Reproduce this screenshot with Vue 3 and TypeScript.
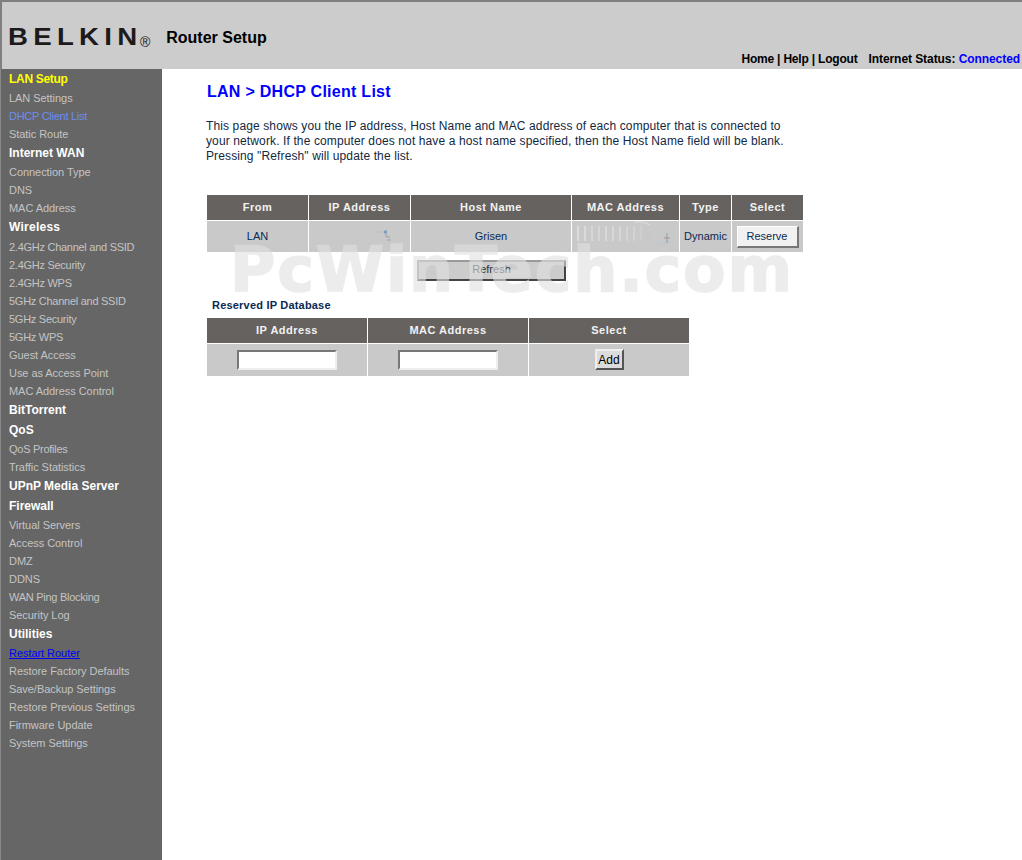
<script setup lang="ts">
interface NavItem { label: string; head?: boolean; kind?: string }
const nav: NavItem[] = [
  { label: 'LAN Setup', head: true, kind: 'cur-head' },
  { label: 'LAN Settings' },
  { label: 'DHCP Client List', kind: 'cur tight' },
  { label: 'Static Route' },
  { label: 'Internet WAN', head: true },
  { label: 'Connection Type' },
  { label: 'DNS' },
  { label: 'MAC Address' },
  { label: 'Wireless', head: true, kind: 'tall' },
  { label: '2.4GHz Channel and SSID', kind: 'tight' },
  { label: '2.4GHz Security', kind: 'tight' },
  { label: '2.4GHz WPS', kind: 'tight' },
  { label: '5GHz Channel and SSID', kind: 'tight' },
  { label: '5GHz Security', kind: 'tight' },
  { label: '5GHz WPS', kind: 'tight' },
  { label: 'Guest Access' },
  { label: 'Use as Access Point' },
  { label: 'MAC Address Control' },
  { label: 'BitTorrent', head: true },
  { label: 'QoS', head: true },
  { label: 'QoS Profiles', kind: 'tight' },
  { label: 'Traffic Statistics' },
  { label: 'UPnP Media Server', head: true },
  { label: 'Firewall', head: true },
  { label: 'Virtual Servers' },
  { label: 'Access Control' },
  { label: 'DMZ' },
  { label: 'DDNS' },
  { label: 'WAN Ping Blocking', kind: 'tight' },
  { label: 'Security Log' },
  { label: 'Utilities', head: true },
  { label: 'Restart Router', kind: 'link' },
  { label: 'Restore Factory Defaults' },
  { label: 'Save/Backup Settings' },
  { label: 'Restore Previous Settings' },
  { label: 'Firmware Update' },
  { label: 'System Settings' },
]
const clientHeads = ['From', 'IP Address', 'Host Name', 'MAC Address', 'Type', 'Select']
const reservedHeads = ['IP Address', 'MAC Address', 'Select']
const stripes = [
  { x: 6, o: 0.9 },
  { x: 13, o: 0.8 },
  { x: 20, o: 0.7 },
  { x: 27, o: 0.6 },
  { x: 34, o: 0.75 },
  { x: 41, o: 0.7 },
  { x: 48, o: 0.65 },
  { x: 55, o: 0.55 },
  { x: 62, o: 0.45 },
  { x: 69, o: 0.3 },
]
</script>

<template>
  <div class="page">
    <header class="top">
      <div class="brand">
        <span class="logo">BELKIN</span>
        <span class="reg">®</span>
        <span class="product">Router Setup</span>
      </div>
      <div class="status">
        <span class="links">Home | Help | Logout</span>
        <span class="net">Internet Status: <span class="conn">Connected</span></span>
      </div>
    </header>
    <div class="body">
      <nav class="side">
        <div
          v-for="n in nav"
          :key="n.label"
          class="nav"
          :class="[n.head ? 'head' : 'item', n.kind]"
        >{{ n.label }}</div>
      </nav>
      <main class="main">
        <h1 class="title">LAN &gt; DHCP Client List</h1>
        <p class="intro">
          This page shows you the IP address, Host Name and MAC address of each computer that is connected to<br />
          your network. If the computer does not have a host name specified, then the Host Name field will be blank.<br />
          Pressing "Refresh" will update the list.
        </p>
        <div class="grid clients">
          <div v-for="h in clientHeads" :key="h" class="th">{{ h }}</div>
          <div class="td txt">LAN</div>
          <div class="td smudged">
            <svg class="smudge ip" width="20" height="20" viewBox="0 0 20 20">
              <path d="M2 2h9" stroke="#bdbdc4" stroke-width="1" fill="none" />
              <path d="M11 0.5h3v3h-3z" fill="#7f9cc0" />
              <path d="M13 4v3M13 7h4M14 10h4" stroke="#9aa1aa" stroke-width="1" fill="none" />
            </svg>
          </div>
          <div class="td txt">Grisen</div>
          <div class="td smudged">
            <svg class="smudge mac" width="106" height="31" viewBox="0 0 106 31">
              <path
                v-for="s in stripes"
                :key="s.x"
                :d="`M${s.x} 5v15`"
                :opacity="s.o"
                stroke="#e6e6e6"
                stroke-width="1.5"
                fill="none"
              />
              <path d="M62 1q10 -1 16 3" stroke="#d8dadc" stroke-width="1.2" fill="none" />
              <path d="M72 10q5 3 7 8q8 9 21 1" stroke="#bfc8cf" stroke-width="1.2" fill="none" />
              <path d="M95 12v10" stroke="#97a6b6" stroke-width="1.2" fill="none" />
              <path d="M92 17h6" stroke="#b09a98" stroke-width="1.2" fill="none" />
            </svg>
          </div>
          <div class="td txt">Dynamic</div>
          <div class="td"><button class="btn reserve" type="button">Reserve</button></div>
        </div>
        <div class="refresh-row"><button class="btn refresh" type="button">Refresh</button></div>
        <div class="reserved-label">Reserved IP Database</div>
        <div class="grid reserved">
          <div v-for="h in reservedHeads" :key="h" class="th">{{ h }}</div>
          <div class="td"><input class="field" type="text" /></div>
          <div class="td"><input class="field" type="text" /></div>
          <div class="td"><button class="btn add" type="button">Add</button></div>
        </div>
        <div class="watermark">PcWinTech.com</div>
      </main>
    </div>
  </div>
</template>

<style>
html, body { margin: 0; background: #fff; }
</style>

<style scoped>
.page {
  box-sizing: border-box;
  width: 1022px;
  height: 860px;
  overflow: hidden;
  display: flex;
  flex-direction: column;
  font-family: "Liberation Sans", Arial, sans-serif;
  background: #fff;
}
.top {
  box-sizing: border-box;
  height: 69px;
  flex: none;
  background: #cccccc;
  border-top: 2px solid #7f7f7f;
  border-left: 2px solid #7f7f7f;
  display: flex;
  justify-content: space-between;
  align-items: flex-start;
  color: #000;
}
.brand {
  display: flex;
  align-items: flex-start;
  padding: 21px 0 0 6px;
}
.logo {
  display: inline-block;
  font-size: 24px;
  line-height: 28px;
  font-weight: 700;
  letter-spacing: 4.6px;
  color: #1c1a1a;
  transform: scaleX(1.15);
  transform-origin: left center;
  margin: 0 15px 0 0;
}
.reg {
  font-size: 14px;
  line-height: 14px;
  color: #111;
  margin: 12px 16px 0 0;
}
.product {
  font-size: 16px;
  line-height: 28px;
  font-weight: 700;
  margin-top: 1px;
}
.status {
  display: flex;
  gap: 11px;
  padding: 49px 2px 0 0;
  font-size: 12px;
  line-height: 16px;
  font-weight: 700;
}
.links { letter-spacing: -0.2px; }
.net { letter-spacing: -0.07px; }
.conn { color: #0000ff; }
.body {
  flex: 1;
  display: flex;
  min-height: 0;
}
.side {
  box-sizing: border-box;
  width: 162px;
  flex: none;
  background: #666666;
  border-left: 1px solid #8a8a8a;
  padding-left: 8px;
}
.nav { white-space: nowrap; }
.head {
  height: 20px;
  line-height: 21px;
  font-size: 12px;
  font-weight: 700;
  color: #fff;
}
.item {
  height: 18px;
  line-height: 18px;
  font-size: 11px;
  letter-spacing: -0.05px;
  color: #c4c4c4;
}
.item.tight { letter-spacing: -0.27px; }
.tall { height: 21px; letter-spacing: 0.25px; }
.cur-head { color: #ffff00; letter-spacing: -0.3px; }
.cur { color: #6c8cf0; }
.link { color: #0000ff; text-decoration: underline; }
.main {
  position: relative;
  flex: 1;
  padding: 13px 0 0 45px;
}
.title {
  margin: 0;
  font-size: 16px;
  line-height: 20px;
  font-weight: 700;
  letter-spacing: 0.27px;
  color: #0000ff;
}
.intro {
  margin: 17px 0 0 -1px;
  font-size: 12px;
  line-height: 15px;
  letter-spacing: 0.12px;
  color: #12283f;
  white-space: nowrap;
}
.grid {
  display: grid;
  gap: 1px;
  color: #0a2a55;
}
.clients {
  margin-top: 31px;
  width: 596px;
  grid-template-columns: 101px 101px 160px 107px 51px 71px;
  grid-template-rows: 25px 31px;
}
.reserved {
  margin-top: 6px;
  width: 482px;
  grid-template-columns: 160px 160px 160px;
  grid-template-rows: 25px 32px;
}
.th {
  box-sizing: border-box;
  padding-bottom: 1px;
  background: #666260;
  color: #f2f2f2;
  font-size: 11px;
  font-weight: 700;
  letter-spacing: 0.5px;
  display: flex;
  align-items: center;
  justify-content: center;
}
.td {
  box-sizing: border-box;
  background: #c9c9c9;
  font-size: 11px;
  display: flex;
  align-items: center;
  justify-content: center;
}
.txt { padding-bottom: 2px; }
.smudged { position: relative; }
.smudge { position: absolute; }
.ip { left: 64px; top: 9px; }
.mac { left: 0; top: 0; }
.btn {
  box-sizing: border-box;
  padding: 0;
  font-family: inherit;
  font-size: 11px;
  color: #0a2a55;
  border-style: solid;
  border-radius: 0;
}
.reserve {
  width: 62px;
  height: 22px;
  background: #f1f1f1;
  border-width: 1px 2px 2px 1px;
  border-color: #fff #777 #777 #fff;
}
.refresh-row {
  margin-top: 7px;
  padding-left: 210px;
  height: 21px;
}
.refresh {
  width: 149px;
  height: 21px;
  padding-bottom: 2px;
  background: #cccccc;
  color: #333;
  border-width: 2px;
  border-color: #999 #444 #444 #999;
}
.add {
  width: 29px;
  height: 21px;
  margin-top: -1px;
  background: #dcdcdc;
  color: #000;
  font-size: 12px;
  border-width: 2px;
  border-color: #eee #555 #555 #eee;
}
.field {
  box-sizing: border-box;
  width: 100px;
  height: 20px;
  padding: 0;
  background: #fff;
  border-style: solid;
  border-width: 2px;
  border-color: #777 #eee #eee #777;
  border-radius: 0;
  outline: none;
}
.reserved-label {
  margin: 18px 0 0 5px;
  font-size: 11px;
  line-height: 14px;
  font-weight: 700;
  letter-spacing: 0.2px;
  color: #0a2a55;
}
.watermark {
  position: absolute;
  left: 68px;
  top: 160px;
  font-family: "DejaVu Sans", sans-serif;
  font-size: 62px;
  line-height: 82px;
  font-weight: 700;
  letter-spacing: 1.8px;
  color: #e1e1e1;
  -webkit-text-stroke: 1.5px #e1e1e1;
  opacity: 0.6;
  white-space: nowrap;
  pointer-events: none;
}
</style>
